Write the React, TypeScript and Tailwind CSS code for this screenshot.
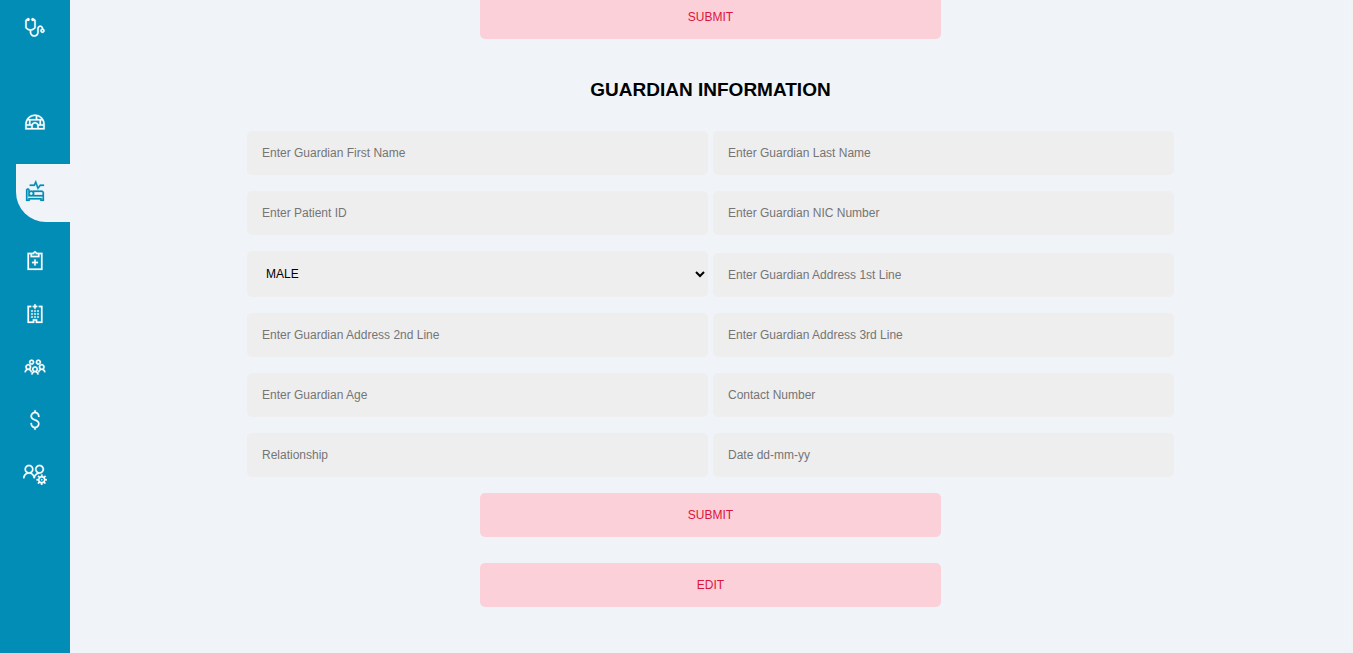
import {
  LiaDollarSignSolid,
  LiaHospitalSolid,
  LiaIglooSolid,
  LiaNotesMedicalSolid,
  LiaProceduresSolid,
  LiaStethoscopeSolid,
  LiaUsersCogSolid,
  LiaUsersSolid,
} from 'react-icons/lia';

const links = [
  { label: 'Dashboard', Icon: LiaIglooSolid },
  { label: 'Patients', Icon: LiaProceduresSolid, active: true },
  { label: 'Records', Icon: LiaNotesMedicalSolid },
  { label: 'Hospital', Icon: LiaHospitalSolid },
  { label: 'Staff', Icon: LiaUsersSolid },
  { label: 'Billing', Icon: LiaDollarSignSolid },
  { label: 'User settings', Icon: LiaUsersCogSolid },
];

function Sidebar() {
  return (
    <aside className="w-[70px] shrink-0 bg-[#028db7] pt-[15px] text-white">
      <a href="#home" aria-label="Home" className="flex justify-center">
        <LiaStethoscopeSolid size={24} strokeWidth={0.3} />
      </a>
      <nav className="mt-14">
        {links.map(({ label, Icon, active }) => (
          <a
            key={label}
            href="#"
            aria-label={label}
            className={
              active
                ? 'mt-4 mb-3 ml-4 flex h-[58px] rounded-bl-[30px] bg-[#f0f4f9] pt-4 pl-[7px] text-[#028db7]'
                : 'flex h-[53px] justify-center pt-[15px]'
            }
          >
            <Icon size={24} strokeWidth={0.3} />
          </a>
        ))}
      </nav>
    </aside>
  );
}

function Field({ label }: { label: string }) {
  return (
    <input
      type="text"
      aria-label={label}
      placeholder={label}
      className="h-11 w-full rounded-[5px] bg-[#eeeeee] px-[15px] text-[12px] placeholder:text-[#757575]"
    />
  );
}

function ActionButton({ children }: { children: string }) {
  return (
    <button
      type="button"
      className="mx-auto block h-11 w-[461px] max-w-full rounded-[5px] bg-[#fbd0d9] text-[12px] text-[#dc143c]"
    >
      {children}
    </button>
  );
}

export default function App() {
  return (
    <div className="flex h-screen overflow-hidden border-r-2 border-[#f1f1f1] bg-[#f0f4f9] font-['Liberation_Sans',Arial,sans-serif]">
      <Sidebar />
      <main className="-mt-[5px] min-w-0 flex-1">
        <form className="mx-auto max-w-[927px]">
          <ActionButton>SUBMIT</ActionButton>
          <h3 className="mt-10 mb-[30px] text-center text-[19px] leading-[22px] font-bold text-black">
            GUARDIAN INFORMATION
          </h3>
          <div className="grid grid-cols-2 items-end gap-x-[5px] gap-y-4">
            <Field label="Enter Guardian First Name" />
            <Field label="Enter Guardian Last Name" />
            <Field label="Enter Patient ID" />
            <Field label="Enter Guardian NIC Number" />
            <select
              aria-label="Gender"
              className="h-[46px] w-full rounded-[5px] bg-[#eeeeee] pl-[15px] text-[12px] text-black"
            >
              <option>MALE</option>
              <option>FEMALE</option>
            </select>
            <Field label="Enter Guardian Address 1st Line" />
            <Field label="Enter Guardian Address 2nd Line" />
            <Field label="Enter Guardian Address 3rd Line" />
            <Field label="Enter Guardian Age" />
            <Field label="Contact Number" />
            <Field label="Relationship" />
            <Field label="Date dd-mm-yy" />
          </div>
          <div className="mt-4 flex flex-col gap-[26px]">
            <ActionButton>SUBMIT</ActionButton>
            <ActionButton>EDIT</ActionButton>
          </div>
        </form>
      </main>
    </div>
  );
}
